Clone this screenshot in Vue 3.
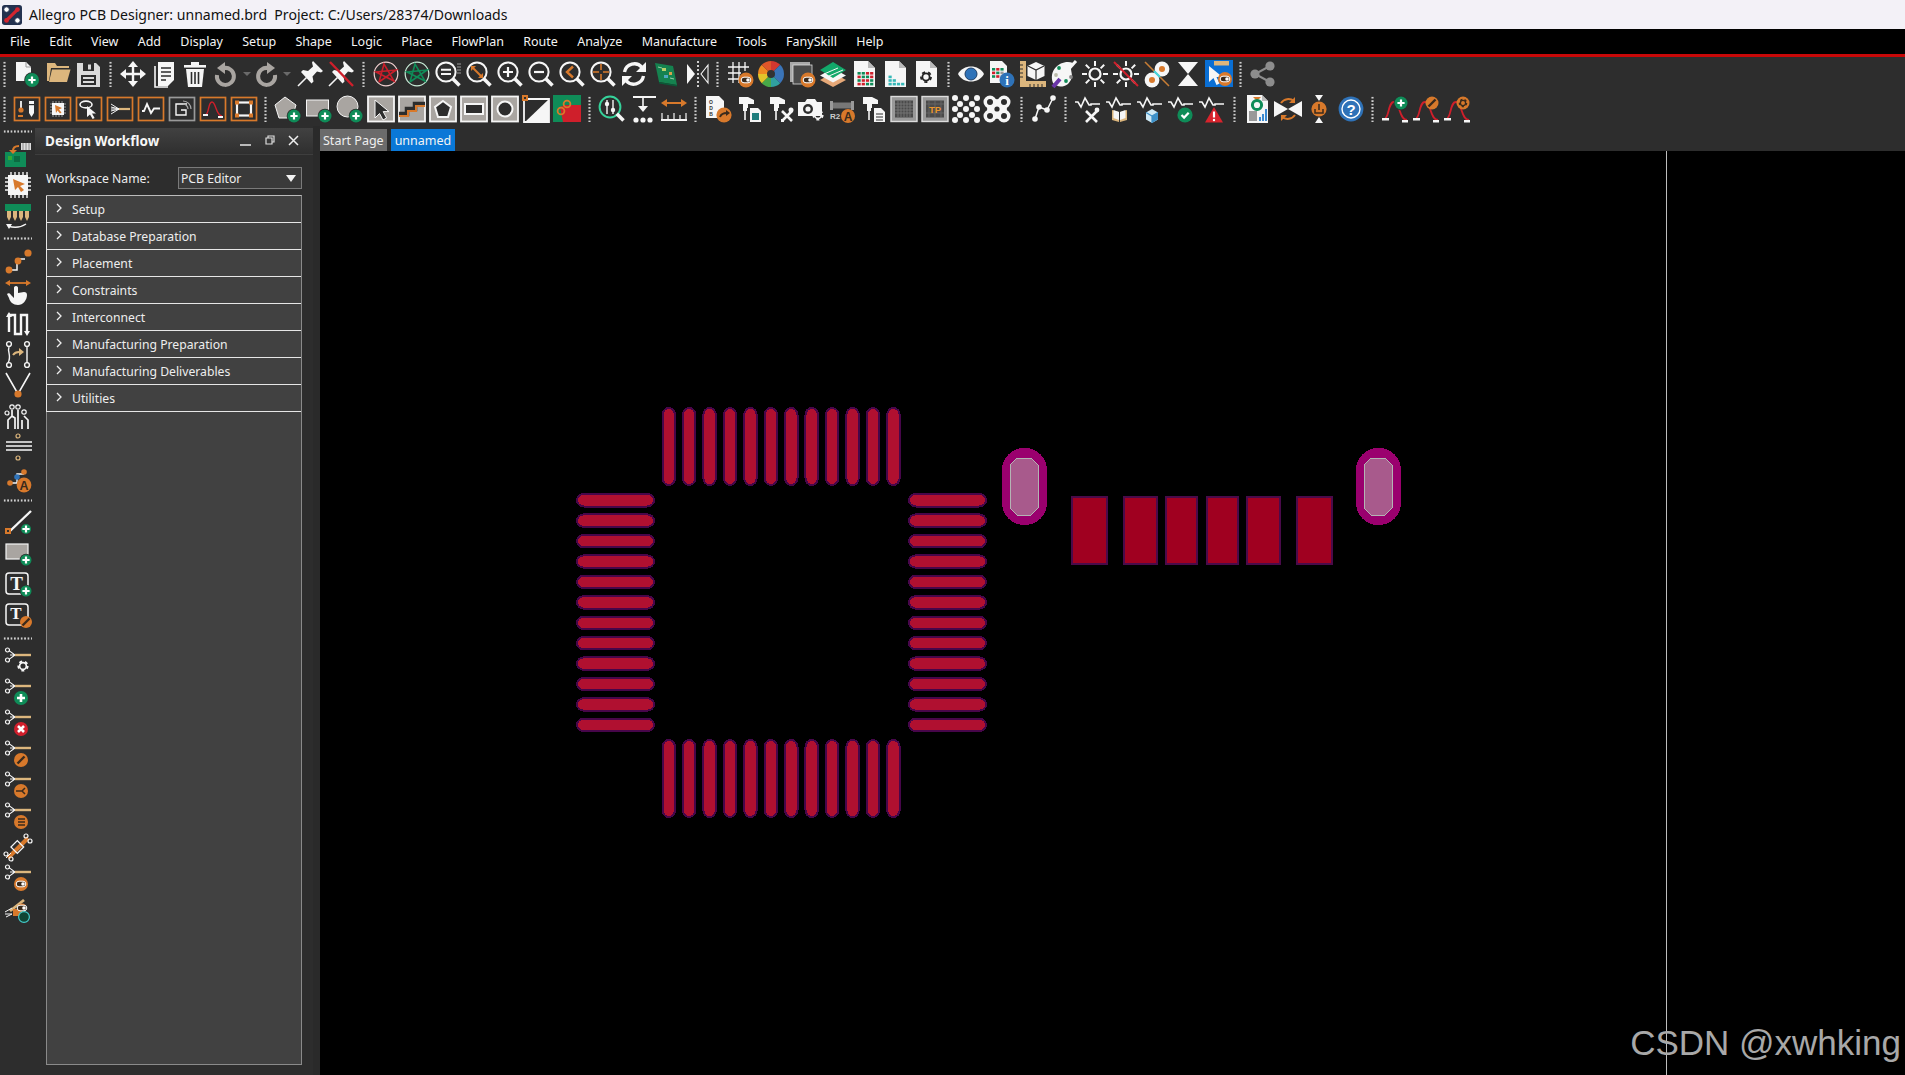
<template>
  <div class="app">
    <div class="titlebar">
      <svg class="logo" viewBox="0 0 22 22">
        <rect x="0" y="0" width="22" height="22" rx="3" fill="#23314f" />
        <path d="M5 17L17 5" stroke="#d3252f" stroke-width="3.4" />
        <circle cx="5" cy="5" r="3" fill="#fff" stroke="#23314f" />
        <circle cx="17" cy="17" r="3" fill="#fff" stroke="#23314f" />
        <circle cx="17" cy="5" r="2.6" fill="#d3252f" />
        <circle cx="5" cy="17" r="2.6" fill="#d3252f" />
      </svg>
      <span>Allegro PCB Designer: unnamed.brd&nbsp;&nbsp;Project: C:/Users/28374/Downloads</span>
    </div>

    <div class="menubar">
      <span v-for="m in menus" :key="m">{{ m }}</span>
    </div>

    <div class="toolbars">
      <div v-for="(row, r) in toolRows" :key="r" class="toolbar">
        <template v-for="(it, i) in row" :key="i">
          <span v-if="it === '|'" class="sep"></span>
          <span v-else-if="typeof it === 'number'" class="spacer" :style="{ width: it + 'px' }"></span>
          <span v-else class="tool" :class="'tool-' + it">
            <svg viewBox="0 0 28 28" v-html="icons[it]"></svg>
            <i v-if="it === 'undo' || it === 'redo'" class="caret"></i>
          </span>
        </template>
      </div>
    </div>

    <div class="main">
      <div class="sidebar">
        <template v-for="(it, i) in sideTools" :key="i">
          <span v-if="it === '|'" class="hsep"></span>
          <span v-else class="side-tool">
            <svg viewBox="0 0 28 28" v-html="icons[it]"></svg>
          </span>
        </template>
      </div>

      <div class="panel">
        <div class="panel-head">
          <span class="panel-title">Design Workflow</span>
          <svg class="win" viewBox="0 0 60 14">
            <path d="M0 11h11" stroke="#ddd" stroke-width="1.6" />
            <path d="M26 4h6v6h-6zM28 4V2h6v6h-2" stroke="#ddd" stroke-width="1.2" fill="none" />
            <path d="M49 2l9 9M58 2l-9 9" stroke="#eee" stroke-width="1.5" />
          </svg>
        </div>
        <div class="workspace">
          <span class="ws-label">Workspace Name:</span>
          <div class="ws-select">
            <span>PCB Editor</span>
            <i class="ws-arrow"></i>
          </div>
        </div>
        <div class="flow-list">
          <div v-for="f in flows" :key="f" class="flow-row">
            <svg class="chev" viewBox="0 0 6 10"><path d="M1 1l4 4-4 4" stroke="#eee" stroke-width="1.3" fill="none" /></svg>
            <span>{{ f }}</span>
          </div>
        </div>
      </div>
      <div class="gutter"></div>

      <div class="work">
        <div class="tabs">
          <span class="tab">Start Page</span>
          <span class="tab active">unnamed</span>
        </div>
        <div class="canvas">
          <svg class="board" viewBox="320 151 1585 924" shape-rendering="crispEdges">
            <path d="M1666.5 151V1075" stroke="#bdbdbd" stroke-width="1" />
            <rect
              v-for="(p, i) in pads"
              :key="i"
              :x="p.x + 1"
              :y="p.y + 1"
              :width="p.w - 2"
              :height="p.h - 2"
              :rx="p.rx"
              class="pad"
            />
            <rect
              v-for="(p, i) in connPads"
              :key="'c' + i"
              :x="p[0] + 1"
              y="497"
              :width="p[1] - p[0] - 2"
              height="67"
              class="conn-pad"
            />
            <g v-for="x in mounts" :key="x">
              <rect :x="x" y="448" width="45" height="77" rx="22" class="mount" />
              <path
                :d="`M${x + 15} 458h14l7 7v43l-7 7h-14l-7-7v-43z`"
                class="mount-in"
              />
            </g>
          </svg>
          <span class="watermark">CSDN @xwhking</span>
        </div>
      </div>
    </div>
  </div>
</template>

<script setup>
const menus = ['File', 'Edit', 'View', 'Add', 'Display', 'Setup', 'Shape', 'Logic', 'Place', 'FlowPlan', 'Route', 'Analyze', 'Manufacture', 'Tools', 'FanySkill', 'Help'];

const flows = ['Setup', 'Database Preparation', 'Placement', 'Constraints', 'Interconnect', 'Manufacturing Preparation', 'Manufacturing Deliverables', 'Utilities'];

const toolRows = [
  ['|', 'new', 'open', 'save', '|', 'move', 'copy', 'trash', 'undo', 'redo', 'pin', 'pinoff', '|',
    'ratRed', 'ratGreen', 'zList', 'zFit', 'zIn', 'zOut', 'zPrev', 'zCenter', 'refresh', 'pcb3d', 'flip', '|',
    'gridT', 'wheel', 'layersT', 'stack', 'sheetRed', 'sheetTeal', 'sheetGear', '|',
    'eye', 'pageInfo', 'ruler3d', 'palette', 'sun', 'sunOff', 'eyesOff', 'hourglass', 'selT', '|', 'share'],
  ['|', 'bMech', 'bChip', 'bLasso', 'bFan', 'bTrace', 'bGray', 'bCurve', 'bBox', '|',
    'pentAdd', 'rectAdd', 'circAdd', 'sArrow', 'sStep', 'sPent', 'sRect', 'sCirc', 'sDiag', 'sPcb', '|',
    'zAnal', 'dimDown', 'dimWide', '|',
    'odbOut', 'gunSheet', 'gunTool', 'camGear', 'r2A', 'gunDoc', 'gridPlain', 'gridTP', 'holesA', 'holesB', 2, '|',
    'polyline', '|', 'wTool', 'wBook', 'wCube', 'wCheck', 'wWarn', '|',
    'report', 'flipSync', 'dropT', 1, 'help', '|', 'cAdd', 'cEdit', 'cGear'],
];

const sideTools = ['|', 'sImport', 'sChip', 'sPinFlip', '|', 'route1', 'hand', 'tuning', 'swap', 'vsplit', 'fanout', 'bus', 'routeA', '|',
  'addLine', 'addRect', 'addText', 'editText', '|',
  'cutGear', 'cutAdd', 'cutDel', 'cutEdit', 'cutShare', 'cutList', 'cutCross', 'cutToggle', 'cutMulti'];

// pcb footprint geometry, in page pixels
const PITCH = 20.42;
const pads = [];
for (let i = 0; i < 12; i++) {
  const x = 661.5 + i * PITCH;
  const y = 493 + i * PITCH;
  pads.push({ x, y: 407, w: 14.5, h: 79, rx: 7 });
  pads.push({ x, y: 739, w: 14.5, h: 79, rx: 7 });
  pads.push({ x: 576, y, w: 79, h: 14.5, rx: 7 });
  pads.push({ x: 908, y, w: 79, h: 14.5, rx: 7 });
}
const connPads = [[1071, 1108], [1123, 1158], [1165, 1198], [1206, 1239], [1246, 1281], [1296, 1333]];
const mounts = [1002, 1356];

// icon helpers, all on a 28x28 grid
const O = '#d8792b';
const G = '#0f8c58';
const T = '#dcb67d';
const R = '#cf1f2b';
const GY = '#a9a5a1';
const W = '#f6f6f6';
const BG = '#2d2d2d';
const BL = '#2e72b8';

const s = (d, c = W, w = 2) => `<path d="${d}" stroke="${c}" stroke-width="${w}" fill="none"/>`;
const f = (d, c = W) => `<path d="${d}" fill="${c}"/>`;
const c = (x, y, r, col = W) => `<circle cx="${x}" cy="${y}" r="${r}" fill="${col}"/>`;
const ring = (x, y, r, col = W, w = 2) => `<circle cx="${x}" cy="${y}" r="${r}" stroke="${col}" stroke-width="${w}" fill="none"/>`;
const rc = (x, y, w, h, col = W) => `<rect x="${x}" y="${y}" width="${w}" height="${h}" fill="${col}"/>`;
const tx = (x, y, t, size, col = W, weight = 700, fam = 'Liberation Sans') => `<text x="${x}" y="${y}" font-size="${size}" fill="${col}" font-weight="${weight}" font-family="${fam}" text-anchor="middle">${t}</text>`;

const plus = (x, y, r = 6.5) => c(x, y, r + 0.8, BG) + c(x, y, r, G) + s(`M${x - 3.6} ${y}h7.2M${x} ${y - 3.6}v7.2`, '#fff', 2.2);
const toggle = (x, y, r = 7.5) => c(x, y, r, O) + `<rect x="${x - 4.8}" y="${y - 2.8}" width="9.6" height="5.6" rx="2.8" fill="#3a2a1c" stroke="#fff" stroke-width="1"/>` + c(x + 2, y, 1.8, '#fff');
const edit = (x, y, r = 7) => c(x, y, r, O) + s(`M${x - 3.5} ${y + 3.5}L${x + 3.5} ${y - 3.5}`, '#3a2a1c', 2.4);
const gear = (x, y, r, col = W) => ring(x, y, r, col, r * 0.5) + `<circle cx="${x}" cy="${y}" r="${r * 1.4}" stroke="${col}" stroke-width="${r * 0.5}" fill="none" stroke-dasharray="${r * 0.88} ${r * 0.88}"/>`;
const mag = (inner = '', col = W) => ring(12, 12, 9.6, col, 2) + s('M18.8 18.8L25.5 25.5', W, 3.6) + inner;
const box = (inner, col = O) => `<rect x="1.5" y="2.5" width="25" height="23" fill="none" stroke="${col}" stroke-width="1.7"/>` + inner;
const sq = (inner) => `<rect x="1" y="1.5" width="26" height="25" fill="${GY}" stroke="${W}" stroke-width="1.8"/>` + inner;
const page = (inner = '') => f('M4 1h14l7 7v19H4z') + f('M18 1v7h7z', '#bbb') + inner;
const wave = (inner = '') => s('M1 7h3l3 5 4-9 4 7h2l0-1h9', W, 1.6) + inner;
const gun = (inner = '') => f('M4 2h9l6 3v4h-6v4H8V9H4z') + s('M10 13v12', W, 1.6) + f('M8 13h4v3H8z') + inner;
const cut = (inner = '') => ring(3.5, 3, 2, W, 1.2) + ring(3.5, 13, 2, W, 1.2) + s('M5 3.6L11 8H6M5 12.4L11 8', W, 1.1) + s('M11 8h16', T, 2.4) + inner;
const sq3 = (x, y, arr) => arr.map((row, j) => row.map((col, i) => (col ? rc(x + i * 4.2, y + j * 3.6, 3.2, 2.6, col) : '')).join('')).join('');
const wedges = ['#d4382f', '#3a74b8', '#3a74b8', '#30a0a0', '#48a848', '#e2c52a', '#ee8a22', '#e0562a'];
const wheel = () => wedges.map((col, i) => {
  const a0 = (i / 8) * 2 * Math.PI - Math.PI / 2;
  const a1 = ((i + 1) / 8) * 2 * Math.PI - Math.PI / 2;
  const p = (a) => `${14 + 13 * Math.cos(a)} ${14 + 13 * Math.sin(a)}`;
  return `<path d="M14 14L${p(a0)}A13 13 0 0 1 ${p(a1)}Z" fill="${col}"/>`;
}).join('') + c(14, 14, 4, '#333');
const curve = (inner = '') => s('M4 23C8 23 7 7 13 7S18 25 26 25', R, 1.8) + rc(1, 23, 7, 2.5) + rc(21, 25, 6, 2.5) + inner;
const rays = s('M14 1v5M14 22v5M1 14h5M22 14h5M4.8 4.8l3.6 3.6M19.6 19.6l3.6 3.6M4.8 23.2l3.6-3.6M19.6 8.4l3.6-3.6', W, 2) + ring(14, 14, 5.5, W, 2.2);
const pinShape = f('M17 1l10 10-2 1.5-4-1-4.5 5 1 5-2 2L5 12l2-2 5 1 5-4.5-1-4z') + s('M10.5 17.5L2 26', W, 1.6);

const icons = {
  new: f('M3 2h10l5 5v14H3z') + s('M13 2v5h5', '#999', 1) + plus(19, 20, 7),
  open: f('M3 3h8l2 3h12v2H7L5 21H3z', T) + f('M8 9.5h18.5L23 22H5z', T),
  save: f('M2 3h19l4 4v20H2z', '#dadada') + rc(8, 3, 11, 8, BG) + rc(13, 4.5, 3, 5, '#dadada') + rc(6, 15, 15, 10, BG) + s('M8 18h11M8 22h11', '#dadada', 2),
  move: s('M14 4v20M4 14h20', W, 2.4) + f('M14 1l5 6H9z') + f('M14 27l5-6H9z') + f('M1 14l6-5v10z') + f('M27 14l-6-5v10z'),
  copy: s('M5 6v21h13', W, 1.6) + f('M8 2h16v18l-6 6H8z') + s('M11 8h10M11 12h10M11 16h10M11 20h5', BG, 1.5),
  trash: f('M3 5h22v2.6H3z') + f('M10 2h8v3h-8z') + f('M5 9h18l-2 18H7z') + s('M10.5 12v12M14 12v12M17.5 12v12', BG, 1.6),
  undo: s('M12 8A8.5 8.5 0 1 1 5 15', GY, 4) + f('M13 2v12L5 8z', GY),
  redo: s('M16 8A8.5 8.5 0 1 0 23 15', GY, 4) + f('M15 2v12l8-6z', GY),
  pin: pinShape,
  pinoff: pinShape + s('M3 2l23 24', R, 2.4),
  ratRed: ring(14, 14, 11.8, '#f2d0d0', 1.2) + s('M7 22L12 4l10 17L4 12l20-2L7 22', '#c81e2a', 1.6),
  ratGreen: ring(14, 14, 11.8, '#c8ecd8', 1.2) + s('M7 22L12 4l10 17L4 12l20-2L7 22', '#0f8c58', 1.6),
  zList: mag(s('M7 9.8h10M7 14h10', W, 2) + s('M23 4h4M23 7h4M23 10h4M23 13h4', '#999', 1)),
  zFit: mag(s('M8 8l8 8', O, 2) + f('M6 6h5L6 11z', O) + f('M18 18h-5l5-5z', O)),
  zIn: mag(s('M7 12h10M12 7v10', W, 2.2)),
  zOut: mag(s('M7 12h10', W, 2.2)),
  zPrev: mag(s('M15 6.5L9 12l6 5.5', O, 2.4)),
  zCenter: mag(s('M12 4v16M4 12h16', O, 1.6) + rc(10, 10, 4, 4, BG)),
  refresh: s('M4.5 12A10 10 0 0 1 22 7.5', W, 3.4) + f('M26 2v10H16z') + s('M23.5 16A10 10 0 0 1 6 20.5', W, 3.4) + f('M2 26V16h10z'),
  pcb3d: f('M4 3l18 3 4 19-18-3z', '#15824f') + f('M8 22l18 3v1.6l-18-3z', '#0a5a38') + rc(11, 8, 4, 3, '#b7cf6a') + rc(18, 12, 3, 3, '#d8a050') + rc(13, 15, 4, 3, '#4ea8c0') + s('M7 7l4 1M19 18l4 1', '#9ad0a8', 1),
  flip: f('M5 4l8 10-8 10z') + s('M16 1v26', W, 1.6).replace('/>', ' stroke-dasharray="2 2"/>') + s('M26 5l-7 9 7 9z', W, 1.1),
  gridT: s('M7 2v21M13 2v21M19 2v9M2 7h21M2 13h13M2 19h12', W, 1.3) + toggle(20, 20),
  wheel: wheel(),
  layersT: rc(2, 2, 20, 20, '#a8a8a8') + `<rect x="5" y="5" width="19" height="19" fill="#4a4a4a" stroke="#ddd" stroke-width="0.8"/>` + toggle(20, 20),
  stack: f('M14 13l13 7-13 7-13-7z', '#e6a878') + f('M14 8.5l13 7-13 7-13-7z') + f('M14 2l13 8-13 8-13-8z', '#12a86a') + s('M5 14l14-6M10 16l14-6', W, 1),
  sheetRed: page(sq3(7.5, 12, [[G, G, R, R], [R, G, G, R], [G, R, R, G], [R, R, G, G]])),
  sheetTeal: page(sq3(7.5, 12, [[0, 0, 0, 0], ['#35b8b8', 0, 0, 0], ['#35b8b8', '#35b8b8', 0, 0], ['#35b8b8', '#35b8b8', '#35b8b8', '#35b8b8']])),
  sheetGear: page(gear(14, 17, 3.6, '#222')),
  eye: f('M1 14C6 4 22 4 27 14 22 24 6 24 1 14z') + c(14, 14, 6, BL) + ring(14, 14, 6, '#1f3f66', 1),
  pageInfo: f('M2 1h12l5 5v17H2z') + sq3(4, 8, [[G, R, G], [R, G, '#999'], [G, R, '#999']]) + c(19, 20, 7.5, BL) + tx(19, 25, 'i', 13, '#fff', 700, 'Liberation Serif'),
  ruler3d: f('M1 1h6v20h20v6H1z', T) + s('M1 5h3M1 9h3M1 13h3M1 17h3M11 24v3M15 24v3M19 24v3M23 24v3', BG, 1) + f('M17 2l8.5 4v10L17 20l-8.5-4V6z') + s('M17 10v10M9 6l8 4 8-4', BG, 1.2),
  palette: f('M3 23C-2 9 12-1 23 3 17 9 27 15 18 24 12 28 7 27 3 23z') + c(9, 8, 1.9, G) + c(6, 15, 1.9, '#bba') + c(16, 21, 1.9, G) + c(21, 17, 1.9, '#888') + s('M26 1L9 20', W, 3) + s('M10 19L3 27', '#6a35a8', 4),
  sun: rays,
  sunOff: rays + s('M2 2l24 24', R, 2),
  eyesOff: c(9, 20, 7.4) + c(9, 20, 3, O) + c(19, 9, 7.4) + c(19, 9, 3, O) + s('M2 2l24 24', '#c87d35', 1.6) + s('M11 11l6 6', '#45d6e0', 2.2),
  hourglass: f('M4 2h20L14 14z') + f('M4 26h20L14 14z'),
  selT: rc(0, 0, 28, 27, '#0a6fd4') + rc(9, 1, 15, 4.5, T) + f('M4 6v16l4.5-4 3 7 3-1.4-3-6.6h6z') + toggle(20, 19, 7),
  share: c(6, 14, 4.6, '#8d8d8d') + c(21, 6, 4.6, '#8d8d8d') + c(21, 22, 4.6, '#8d8d8d') + s('M21 6L6 14l15 8', '#8d8d8d', 2),

  bMech: box(s('M8 6v8', W, 1.8) + c(8, 15, 2.6, O) + s('M5 21h5', O, 2) + f('M16 6h5v12l-2.5 4-2.5-4z') + rc(16, 9, 5, 1.2, BG)),
  bChip: box(s('M9 6v16M12 6v16M15 6v16M18 6v16M6 9h16M6 12h16M6 15h16M6 18h16', '#999', 1) + rc(8, 8, 12, 12) + f('M11 10l7 3-3 1.5 2.5 3-1.5 1-2.5-3-1.5 2.5z', O)),
  bLasso: box(`<ellipse cx="11" cy="9.5" rx="6" ry="3.4" stroke="${W}" stroke-width="1.6" fill="none"/>` + f('M12 11v11l3-2.6 2.6 4.6 2-1-2.6-4.6h4z')),
  bFan: box(s('M13 14h11', T, 2.2) + s('M13 14L5 9M13 14L5 12M13 14H5M13 14L5 16M13 14L5 19', W, 1)),
  bTrace: box(s('M5 16h2l3-7 4 9 3-4.5h6', W, 1.9)),
  bGray: box(s('M19 9H8v11h10v-5h-5', W, 1.4) + s('M15 6a8 8 0 0 1 8 8M15 9a5 5 0 0 1 5 5', '#aaa', 1.2), '#999'),
  bCurve: box(s('M7 19C10 19 9 7 13 7S17 21 23 21', R, 1.4) + rc(4, 19, 5, 2) + rc(19, 21, 5, 2)),
  bBox: box(`<rect x="7" y="7.5" width="14" height="13" stroke="${W}" stroke-width="2.2" fill="none"/>` + rc(5, 5.5, 4, 4, O) + rc(19, 5.5, 4, 4, O) + rc(5, 18.5, 4, 4, O) + rc(19, 18.5, 4, 4, O)),

  pentAdd: `<path d="M11 2l11 8-4 13H5L1 10z" fill="${GY}" stroke="${W}"/>` + plus(20, 21),
  rectAdd: `<rect x="1.5" y="5" width="22" height="16" fill="${GY}" stroke="${W}"/>` + plus(20, 21),
  circAdd: `<circle cx="11.5" cy="11.5" r="10.5" fill="${GY}" stroke="${W}"/>` + plus(20, 21),
  sArrow: sq(`<path d="M8 5v18l4.5-4.5L16 25l3.6-2-3.4-6.4H22z" fill="${BG}" stroke="${W}" stroke-width="1"/>`),
  sStep: sq(s('M1 19h8v-5h8V9h10', BG, 4.5) + s('M1 21h9v-5h8v-5h9', O, 2)),
  sPent: sq(`<path d="M14 6l8 6-3 10H9L6 12z" fill="${BG}" stroke="${W}" stroke-width="2"/>`),
  sRect: sq(`<rect x="5" y="9" width="18" height="10" fill="${BG}" stroke="${W}" stroke-width="2"/>`),
  sCirc: sq(`<circle cx="14" cy="14" r="7.5" fill="${BG}" stroke="${W}" stroke-width="2"/>`),
  sDiag: s('M2 4h25v23H2z', W, 1.8) + f('M27 4v23H3z') + rc(0, 0, 6, 6, O) + rc(2, 2, 2, 2, BG),
  sPcb: rc(0, 0, 28, 27, G) + f('M7 12l5-2 16 0v17H10z', R) + ring(8, 16, 3.4, O, 1.8) + ring(14, 9, 3.4, O, 1.8),

  zAnal: ring(12, 12, 10.4, '#35d29a', 2) + s('M18.8 18.8L25.5 25.5', W, 3.6) + s('M9 5v14M15 5v14', W, 1.4) + c(9, 9, 2.2) + c(15, 15, 2.2),
  dimDown: s('M4 2h23', W, 2) + s('M14 2v12', W, 1.6) + f('M9 11h10l-5 6z') + c(7, 25, 2.6) + c(14, 25, 2.6) + c(21, 25, 2.6),
  dimWide: s('M4 8h20', O, 2) + f('M1 8l6-4v8z', O) + f('M27 8l-6-4v8z', O) + s('M1 25h26', W, 2) + s('M2 18v6M8 20v4M14 18v6M20 20v4M26 18v6', W, 1.2),

  odbOut: f('M2 1h13l5 5v17H2z') + tx(7, 9, 'O', 5, '#333') + tx(7, 15, 'D', 5, '#333') + tx(7, 21, 'B', 5, '#333') + c(20, 20, 7.6, O) + s('M16 22c1-3 3-4 7-4', '#3a2a1c', 1.8) + f('M22 15l4 3-4 3z', '#3a2a1c'),
  gunSheet: gun(f('M15 13h8l3 3v11H15z') + rc(17, 18, 7, 7, '#1e7d7d')),
  gunTool: gun(s('M16 16l10 10M26 16L16 26', W, 2.6) + c(25, 15, 2.5) + rc(15, 24, 3, 3)),
  camGear: f('M1 7h7l2-3h8l2 3h5v14H1z') + c(11, 14, 5, BG) + c(11, 14, 2.6) + gear(21, 20, 3.4, W),
  r2A: rc(2, 6, 3, 9, '#999') + rc(23, 6, 3, 9, '#999') + rc(5, 7.5, 18, 6, '#777') + tx(7, 24, 'R2', 8, '#ccc') + c(20, 21, 7, O) + tx(20, 25.5, 'A', 12, '#3a2a1c'),
  gunDoc: gun(f('M15 13h7l4 4v10H15z') + s('M17 19h7M17 22h7M17 25h7', BG, 1.2)),
  gridPlain: `<rect x="1" y="1.5" width="26" height="25" fill="#999" stroke="#ddd" stroke-width="1.4"/>` + rc(5, 5.5, 18, 17, '#4a4a4a') + s('M8 6v16M11 6v16M14 6v16M17 6v16M20 6v16M5 9h18M5 12h18M5 15h18M5 18h18', '#777', 0.9),
  gridTP: `<rect x="1" y="1.5" width="26" height="25" fill="#999" stroke="#ddd" stroke-width="1.4"/>` + rc(5, 5.5, 18, 17, '#4a4a4a') + s('M8 6v16M14 6v16M20 6v16M5 9h18M5 18h18', '#666', 0.9) + tx(14, 18, 'TP', 9.5, '#e8952c'),
  holesA: [[3, 3], [14, 3], [25, 3], [8, 9], [20, 9], [3, 14], [14, 14], [25, 14], [8, 20], [20, 20], [3, 25], [14, 25], [25, 25]].map(([x, y]) => c(x, y, 3)).join(''),
  holesB: rc(3, 3, 22, 22) + [[7, 7], [21, 7], [7, 21], [21, 21]].map(([x, y]) => c(x, y, 3, BG)).join('') + [[14, 1], [14, 27], [1, 14], [27, 14]].map(([x, y]) => c(x, y, 3.2, BG)).join('') + [[7, 7], [21, 7], [7, 21], [21, 21]].map(([x, y]) => ring(x, y, 5, W, 3)).join('') + c(14, 14, 2.6, BG),

  polyline: s('M5 24L9 12l8 3 6-12', W, 1.5) + c(5, 24, 2.8) + c(9, 12, 2.8) + c(17, 15, 2.8) + c(23, 3, 2.8),

  wTool: wave(s('M12 16l11 11M23 16L12 27', W, 2.6) + c(23, 15, 2.4)),
  wBook: wave(f('M7 15l7 2v10l-7-2z', T) + f('M22 15l-7 2v10l7-2z', T) + f('M8.5 15l5.5 2v8l-5.5-2zM20.5 15L15 17v8l5.5-2z')),
  wCube: wave(f('M16 14l6 3.4v7L16 28l-6-3.6v-7z', '#cfe9f5') + s('M16 21v7M10 17.4l6 3.6 6-3.6', '#3c90c8', 1.2) + f('M22 17.4v7L16 28v-7z', '#3c90c8')),
  wCheck: wave(c(18, 20, 7.6, G) + s('M14.5 20l2.6 2.6 4.6-4.8', '#fff', 2.2)),
  wWarn: wave(f('M16 12l9 15.5H7z', '#d8232c') + s('M16 16.5v6', '#fff', 2.2) + c(16, 25, 1.2, '#fff')),

  report: f('M4 0h15l6 6v22H4z') + f('M19 0v6h6z', '#bbb') + f('M10 2h8l-4 4z', O) + ring(14, 10, 4.6, G, 3) + rc(6, 16, 8, 10, '#999') + s('M17 26v-4M20 26v-7M23 26V14', '#3c8ad0', 2),
  flipSync: f('M0 6l14 8-14 8zM28 6L14 14l14 8z') + s('M7 8a9 9 0 0 1 13-2M21 20a9 9 0 0 1-13 2', O, 2) + f('M21 2v6h-6zM7 26v-6h6z', O),
  dropT: f('M10 0h8l-4 6zM10 28h8l-4-6z') + c(14, 14, 7.6, O) + s('M10 14v4h8v-4M14 9v6', '#3a2a1c', 1.5),
  help: c(14, 14, 12.4, BL) + ring(14, 14, 9, '#fff', 1.4) + tx(14, 19.5, '?', 15, '#fff'),
  cAdd: curve(plus(20, 8, 6.5)),
  cEdit: curve(edit(20, 8, 6.5)),
  cGear: curve(c(20, 8, 6.5, O) + gear(20, 8, 2.6, '#3a2a1c')),

  sImport: rc(1, 12, 21, 15, G) + rc(4, 16, 4, 4, '#3a3') + rc(10, 16, 6, 6, '#0c6a42') + rc(17, 3, 10, 7, '#ddd') + s('M19 3v7M22 3v7M25 3v7', '#888', 1) + s('M15 6C10 6 9 8 9 11', O, 2.2) + f('M5 10h8l-4 4z', O),
  sChip: s('M7 1v26M11 1v26M15 1v26M19 1v26M23 1v26M1 7h26M1 11h26M1 15h26M1 19h26', W, 1.4) + rc(4, 4, 20, 20) + f('M9 8l12 5-5 2 4 4-3 2-3-5-3 3z', O),
  sPinFlip: rc(1, 2, 26, 7, G) + [5, 11, 17, 23].map((x) => f(`M${x - 2} 9h4v6l-2 4-2-4z`, T)).join('') + s('M4 24c6 2 12 2 18-2', W, 1.4) + f('M2 22l6 0-3 5z'),
  route1: s('M5 23h8V12h8', W, 1.5) + c(5, 23, 3.4, O) + c(14, 14, 3.4, O) + c(24, 6, 3.6, O),
  hand: f('M12 8c1.6 0 2 1 2 2v5l6-1c2 0 3 1 3 3 0 5-4 10-9 10-5 0-8-3-9-7l-2-4c1-1 3-1 4 1l3 3V10c0-1 .4-2 2-2z') + s('M4 5h18', O, 1.8) + f('M1 5l5-3v6zM27 5l-5-3v6z', O),
  tuning: s('M5 23V6h6v19h6V6h6v17', W, 2.4) + f('M2 8l3-5 3 5zM20 22l3 5 3-5z'),
  swap: s('M5 7C3 12 8 16 4 23M23 7v16', W, 1.4) + ring(5, 4, 2.4, W, 1.4) + ring(23, 4, 2.4, W, 1.4) + ring(5, 25, 2.4, W, 1.4) + ring(23, 25, 2.4, W, 1.4) + s('M9 15c2-3 4-3 6-3', T, 2) + f('M15 8l5 4-5 4z', T),
  vsplit: s('M2 2l12 21L26 2', W, 1.6) + c(14, 23, 3.6, O),
  fanout: s('M4 27V18l4-4V8M11 27V16l-3-2M14 27V8M18 27V18M24 27V18l-4-4', W, 1.7) + ring(8, 5, 2.2, W, 1.2) + ring(14, 5, 2.2, W, 1.2) + ring(20, 10, 2.2, W, 1.2) + ring(3, 11, 2, W, 1.2),
  bus: ring(14, 3, 2, T, 1.2) + s('M2 9h26M2 13h26M2 17h26', W, 1.6) + ring(14, 25, 2, T, 1.2),
  routeA: s('M6 19h7v-9h7', W, 1.4) + c(6, 19, 2.8, O) + c(13, 13, 2.8, BL) + c(20, 8, 2.8, O) + c(20, 21, 7.4, O) + tx(20, 26, 'A', 12.5, '#3a2a1c'),
  addLine: s('M6 22L27 2', W, 2.4) + rc(1, 19, 6, 6, O) + rc(3, 21, 2, 2, BG) + plus(22, 20, 5),
  addRect: `<rect x="2" y="4" width="22" height="15" fill="${GY}" stroke="${W}" stroke-width="1.2"/>` + plus(22, 20, 5.5),
  addText: `<rect x="2" y="2" width="22" height="21" rx="3" stroke="${W}" stroke-width="1.5" fill="none"/>` + tx(12.5, 19, 'T', 19, W, 700, 'Liberation Serif') + plus(22, 20, 5.5),
  editText: `<rect x="2" y="2" width="22" height="21" rx="3" stroke="${W}" stroke-width="1.5" fill="none"/>` + tx(12, 17, 'T', 17, W, 700, 'Liberation Serif') + edit(22, 20, 6),
  cutGear: cut(gear(19, 19, 3.4, W)),
  cutAdd: cut(c(17, 20, 7, G) + s('M13 20h8M17 16v8', '#fff', 2.6)),
  cutDel: cut(c(17, 20, 7, '#d01f2c') + s('M14 17l6 6M20 17l-6 6', '#fff', 2.6)),
  cutEdit: cut(edit(17, 20, 7)),
  cutShare: cut(c(17, 20, 7, O) + s('M12 20h6l3-3M18 20l3 3', '#3a2a1c', 1.5)),
  cutList: cut(c(17, 20, 7, O) + s('M14 17h7M14 20h7M14 23h7', '#3a2a1c', 1.4)),
  cutCross: s('M4 25L24 5', O, 4) + `<rect x="9" y="9" width="9" height="9" fill="none" stroke="${W}" stroke-width="1.3" transform="rotate(-45 14 14)"/>` + ring(22, 3, 2, W, 1.2) + ring(26, 8, 2, W, 1.2) + ring(2, 21, 2, W, 1.2) + ring(7, 26, 2, W, 1.2) + s('M2 25l5-5', W, 1),
  cutToggle: cut(toggle(17, 20, 7)),
  cutMulti: s('M6 16L20 5', T, 2.8) + s('M1 17l7-4M1 19h7M2 22l6-3', W, 1) + rc(9, 14, 7, 7, O) + toggle(18, 13, 4.5) + c(20, 22, 5.4, '#143') + ring(20, 22, 5.4, '#4cc', 1.2),
};
</script>

<style scoped>
.app {
  width: 1905px;
  height: 1075px;
  display: flex;
  flex-direction: column;
  overflow: hidden;
  background: #2d2d2d;
  color: #eee;
  font-family: "Noto Sans", "Open Sans", sans-serif;
}

.titlebar {
  height: 29px;
  flex: none;
  display: flex;
  align-items: center;
  gap: 7px;
  padding-left: 2px;
  background: #f3f1f7;
  color: #111;
  font-size: 14.07px;
}

.logo {
  width: 20px;
  height: 20px;
}

.menubar {
  height: 25px;
  flex: none;
  display: flex;
  align-items: center;
  padding-left: 10px;
  gap: 19.3px;
  background: #000;
  border-bottom: 3px solid #c80808;
  font-size: 12.5px;
  color: #f4f4f4;
}

.toolbars {
  flex: none;
  height: 69px;
  display: flex;
  flex-direction: column;
}

.toolbar {
  height: 35px;
  display: flex;
  align-items: center;
}

.sep {
  width: 13.5px;
  height: 26px;
  flex: none;
  background: radial-gradient(circle, #cfcfcf 1px, transparent 1.2px) center top / 3px 3.4px repeat-y;
}

.toolbar .sep:first-child {
  width: 8px;
  margin-right: 3px;
}

.spacer {
  flex: none;
}

.tool {
  width: 31px;
  height: 28px;
  flex: none;
  display: flex;
  align-items: center;
  justify-content: center;
}

.tool svg,
.side-tool svg {
  width: 28px;
  height: 28px;
  overflow: visible;
}

.tool-undo,
.tool-redo {
  justify-content: flex-start;
  padding-left: 1.5px;
  box-sizing: border-box;
}

.tool-undo {
  width: 40px;
}

.tool-redo {
  width: 44px;
}

.caret {
  margin-left: 3px;
  width: 0;
  height: 0;
  border-left: 4px solid transparent;
  border-right: 4px solid transparent;
  border-top: 4px solid #6a6a6a;
}

.main {
  flex: 1;
  min-height: 0;
  display: flex;
}

.sidebar {
  width: 35px;
  flex: none;
  display: flex;
  flex-direction: column;
  align-items: center;
  margin-top: -2px;
}

.hsep {
  width: 29px;
  height: 14px;
  flex: none;
  background: radial-gradient(circle, #cfcfcf 1px, transparent 1.2px) left center / 3.4px 3px repeat-x;
}

.side-tool {
  height: 31px;
  flex: none;
  display: flex;
  align-items: center;
  justify-content: center;
}

.panel {
  width: 278px;
  flex: none;
  display: flex;
  flex-direction: column;
  margin-top: 2px;
}

.panel-head {
  height: 26px;
  flex: none;
  display: flex;
  align-items: center;
  justify-content: space-between;
  padding: 0 13px 0 10px;
  background: linear-gradient(#414141, #2f2f2f);
  border-bottom: 1px solid #3e3e3e;
}

.panel-title {
  font-size: 13.5px;
  font-weight: 700;
  color: #f6f6f6;
}

.win {
  width: 60px;
  height: 14px;
}

.workspace {
  height: 40px;
  flex: none;
  display: flex;
  align-items: center;
  justify-content: space-between;
  padding: 6px 11px 0 11px;
  font-size: 12.2px;
  box-sizing: border-box;
}

.ws-select {
  width: 124px;
  height: 22px;
  box-sizing: border-box;
  display: flex;
  align-items: center;
  justify-content: space-between;
  padding: 0 5px 0 2px;
  border: 1px solid #7a7a7a;
  background: #3a3a3a;
}

.ws-arrow {
  width: 0;
  height: 0;
  border-left: 5px solid transparent;
  border-right: 5px solid transparent;
  border-top: 7px solid #f2f2f2;
}

.flow-list {
  flex: 1;
  margin: 0 11px 10px 11px;
  background: #414141;
  border: 1px solid #8a8a8a;
  border-top-color: #bbb;
  font-size: 12.2px;
}

.flow-row {
  height: 27px;
  box-sizing: border-box;
  display: flex;
  align-items: center;
  padding-left: 9px;
  gap: 10px;
  border-bottom: 1.5px solid #e6e6e6;
  border-left: 1px solid #e6e6e6;
  margin-left: -1px;
}

.flow-row span {
  color: #eee;
}

.chev {
  width: 6px;
  height: 10px;
  margin-top: -3px;
}

.gutter {
  width: 7px;
  flex: none;
  background: #2a2a2a;
}

.work {
  flex: 1;
  min-width: 0;
  display: flex;
  flex-direction: column;
}

.tabs {
  height: 25px;
  flex: none;
  display: flex;
  align-items: flex-end;
  gap: 4px;
  background: #2d2d2d;
  font-size: 12.5px;
}

.tab {
  height: 22px;
  padding: 0 3px;
  display: flex;
  align-items: center;
  background: #6b6b6b;
  color: #eee;
}

.tab.active {
  background: #0a78d7;
  color: #f4f4f4;
  padding: 0 4px;
}

.canvas {
  flex: 1;
  min-height: 0;
  position: relative;
  background: #000;
}

.board {
  position: absolute;
  inset: 0;
  width: 100%;
  height: 100%;
}

.pad {
  fill: #b01030;
  stroke: #47064a;
  stroke-width: 2;
}

.conn-pad {
  fill: #a00020;
  stroke: #4a0a4a;
  stroke-width: 2;
}

.mount {
  fill: #9a006e;
}

.mount-in {
  fill: #a85a8c;
  stroke: #b4b4b4;
  stroke-width: 1;
}

.watermark {
  position: absolute;
  right: 4px;
  bottom: 11px;
  font-family: "Liberation Sans", sans-serif;
  font-size: 35px;
  line-height: 42px;
  color: #a8a8a8;
}
</style>

<style>
html,
body {
  margin: 0;
  background: #2d2d2d;
}
</style>
